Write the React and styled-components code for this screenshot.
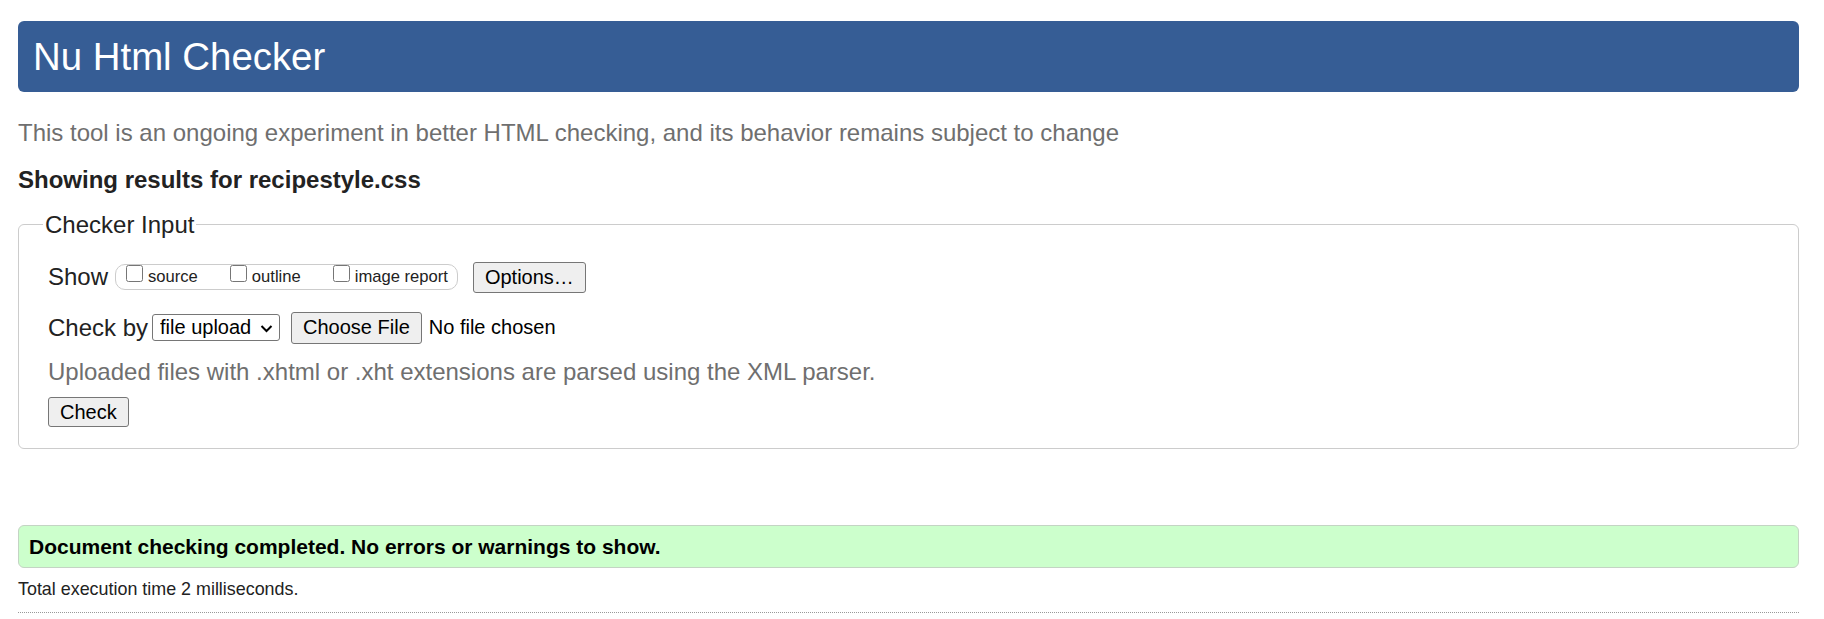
import React from 'react';
import styled, { createGlobalStyle } from 'styled-components';

const GlobalStyle = createGlobalStyle`
  html, body {
    margin: 0;
    padding: 0;
    background: #fff;
  }
  body {
    font-family: "Liberation Sans", Arial, sans-serif;
    color: #222;
  }
`;

const Page = styled.div`
  padding: 21px 25px 0 18px;
`;

const Header = styled.h1`
  margin: 0;
  height: 71px;
  box-sizing: border-box;
  padding: 13.5px 15px;
  background: #365d95;
  color: #fff;
  border-radius: 6px;
  font-size: 38.4px;
  font-weight: normal;
  line-height: 44px;
`;

const Intro = styled.p`
  margin: 27px 0 0;
  font-size: 24px;
  line-height: 27.6px;
  color: #6f6f6f;
`;

const Showing = styled.h2`
  margin: 19px 0 0;
  font-size: 24px;
  line-height: 27.6px;
  font-weight: bold;
  color: #222;
`;

const Fieldset = styled.fieldset`
  margin: 18px 0 0;
  padding: 0 29px 21px;
  border: 1px solid #ccc;
  border-radius: 6px;
`;

const Legend = styled.legend`
  margin-left: -5px;
  padding: 0 2px;
  font-size: 24px;
  line-height: 27.6px;
  color: #222;
`;

const Row = styled.div`
  display: flex;
  align-items: center;
  margin-top: ${p => p.$top}px;
  font-size: 24px;
  line-height: 27.6px;
`;

const Label = styled.span`
  margin-right: ${p => p.$gap}px;
`;

const Group = styled.span`
  display: inline-flex;
  align-items: flex-start;
  height: 26px;
  box-sizing: border-box;
  border: 1px solid #ccc;
  border-radius: 10px;
  padding: 0 9px 0 5px;
  gap: 27px;
  margin-right: 15px;
`;

const CheckLabel = styled.label`
  display: inline-flex;
  align-items: baseline;
  font-size: 16.6px;
  line-height: 19px;
  color: #222;
`;

const Checkbox = styled.input.attrs({ type: 'checkbox' })`
  width: 17px;
  height: 17px;
  margin: 0 5px 4.5px 5px;
`;

const Button = styled.button`
  font-family: "Liberation Sans", Arial, sans-serif;
  font-size: 20px;
  line-height: 23px;
  padding: ${p => p.$pad || '3px'} 11px;
  background: #efefef;
  color: #000;
  border: 1px solid #767676;
  border-radius: 3px;
  margin-right: ${p => p.$gap || 0}px;
`;

const SelectWrap = styled.span`
  position: relative;
  display: inline-flex;
  margin-right: 11px;
`;

const Select = styled.select`
  appearance: none;
  font-family: "Liberation Sans", Arial, sans-serif;
  font-size: 20px;
  line-height: 23px;
  width: 128px;
  height: 27px;
  padding: 0 0 0 7px;
  color: #000;
  background: #fff;
  border: 1px solid #767676;
  border-radius: 3px;
`;

const Chevron = styled.svg`
  position: absolute;
  right: 7px;
  top: 9.5px;
  width: 13px;
  height: 9px;
  pointer-events: none;
`;

const FileStatus = styled.span`
  font-size: 20px;
  color: #000;
`;

const Note = styled.p`
  margin: 14px 0 0;
  font-size: 24px;
  line-height: 27.6px;
  color: #6f6f6f;
`;

const Success = styled.p`
  margin: 76px 0 0;
  padding: 8.5px 10px;
  background: #ccffcc;
  border: 1px solid #c4d4c4;
  border-radius: 6px;
  font-size: 21px;
  line-height: 24px;
  font-weight: bold;
  color: #000;
`;

const Timing = styled.p`
  margin: 11px 0 0;
  font-size: 17.9px;
  line-height: 20px;
  color: #222;
`;

const Rule = styled.hr`
  margin: 13px 0 0;
  border: 0;
  border-top: 1px dotted #999;
`;

export default function App() {
  return (
    <>
      <GlobalStyle />
      <Page>
        <Header>Nu Html Checker</Header>
        <Intro>
          This tool is an ongoing experiment in better HTML checking, and its behavior remains subject to change
        </Intro>
        <Showing>Showing results for recipestyle.css</Showing>

        <Fieldset>
          <Legend>Checker Input</Legend>
          <Row $top={23}>
            <Label $gap={7}>Show</Label>
            <Group>
              <CheckLabel><Checkbox />source</CheckLabel>
              <CheckLabel><Checkbox />outline</CheckLabel>
              <CheckLabel><Checkbox />image report</CheckLabel>
            </Group>
            <Button>Options…</Button>
          </Row>
          <Row $top={19}>
            <Label $gap={4}>Check by</Label>
            <SelectWrap>
              <Select defaultValue="file">
                <option value="address">address</option>
                <option value="file">file upload</option>
                <option value="text">text input</option>
              </Select>
              <Chevron viewBox="0 0 13 9">
                <path d="M1.5 2 L6.5 7 L11.5 2" fill="none" stroke="#000" strokeWidth="2" />
              </Chevron>
            </SelectWrap>
            <Button $gap={7} $pad="3.5px">Choose File</Button>
            <FileStatus>No file chosen</FileStatus>
          </Row>
          <Note>Uploaded files with .xhtml or .xht extensions are parsed using the XML parser.</Note>
          <Row $top={12}>
            <Button $pad="2.5px">Check</Button>
          </Row>
        </Fieldset>

        <Success>Document checking completed. No errors or warnings to show.</Success>
        <Timing>Total execution time 2 milliseconds.</Timing>
        <Rule />
      </Page>
    </>
  );
}
